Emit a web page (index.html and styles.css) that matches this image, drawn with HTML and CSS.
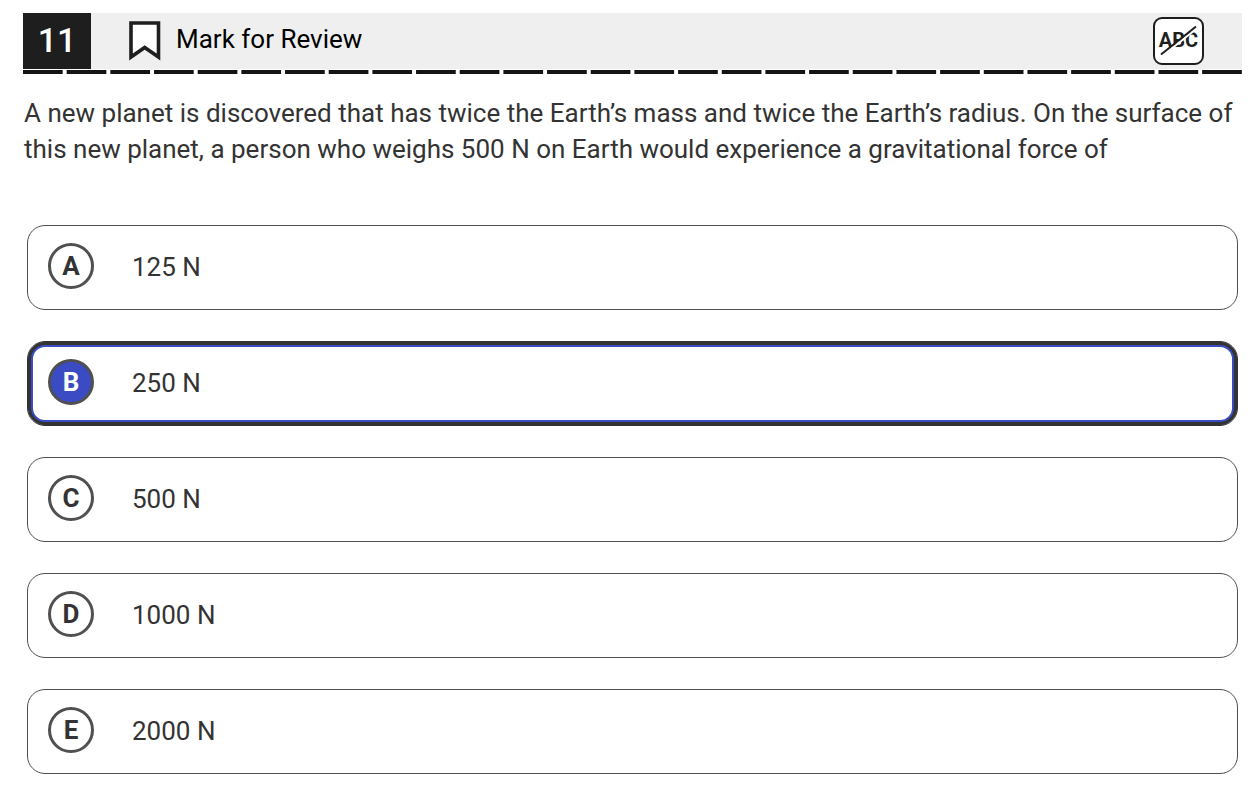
FILE: index.html
```html
<!DOCTYPE html>
<html lang="en">
<head>
    <meta charset="UTF-8">
    <meta name="viewport" content="width=device-width, initial-scale=1.0">
    <title>Question 11</title>
    <link rel="stylesheet" href="styles.css">
</head>
<body>

    <header class="question-bar">
        <h1 class="question-number">11</h1>
        <button class="mark-button" type="button">
            <svg class="bookmark" viewBox="0 0 32 40" aria-hidden="true">
                <path d="M2 2H29.500V36L15.700 26.500L2 36Z" fill="#fff" stroke="#1e1e1e" stroke-width="3.600"/>
            </svg>
            <span class="mark-text">Mark for Review</span>
        </button>
        <button class="strike-button" type="button" aria-label="Cross out answers">
            <svg class="strike-icon" viewBox="0 0 47 44" aria-hidden="true">
                <text x="23.500" y="28" text-anchor="middle">ABC</text>
                <path d="M8 36.500L43 8.500" stroke="#fff" stroke-width="2"/>
                <path d="M6 35.500L41 7.500" stroke="#1e1e1e" stroke-width="2"/>
            </svg>
        </button>
    </header>
    <div class="dashes"></div>

    <main>
        <p class="question" id="question">A new planet is discovered that has twice the Earth’s mass and twice the Earth’s radius. On the surface of this new planet, a person who weighs 500 N on Earth would experience a gravitational force of</p>

        <form class="choices" role="radiogroup" aria-labelledby="question">
            <label class="choice">
                <input type="radio" name="answer" value="A">
                <span class="letter">A</span>
                <span class="answer">125 N</span>
            </label>
            <label class="choice">
                <input type="radio" name="answer" value="B" checked>
                <span class="letter">B</span>
                <span class="answer">250 N</span>
            </label>
            <label class="choice">
                <input type="radio" name="answer" value="C">
                <span class="letter">C</span>
                <span class="answer">500 N</span>
            </label>
            <label class="choice">
                <input type="radio" name="answer" value="D">
                <span class="letter">D</span>
                <span class="answer">1000 N</span>
            </label>
            <label class="choice">
                <input type="radio" name="answer" value="E">
                <span class="letter">E</span>
                <span class="answer">2000 N</span>
            </label>
        </form>
    </main>

</body>
</html>
```
FILE: styles.css
```css
* {
    box-sizing: border-box;
}
body {
    margin: 0;
    padding: 13px 6px 13px 23px;
    background-color: white;
    color: #333;
    font-family: Roboto, Arial, sans-serif;
    font-size: 26px;
}
button {
    font: inherit;
    border: none;
    cursor: pointer;
}
.question-bar {
    display: flex;
    align-items: center;
    height: 56px;
    padding-right: 38px;
    background-color: #efefef;
}
.question-number {
    align-self: stretch;
    width: 68px;
    margin: 0;
    background-color: #1e1e1e;
    color: white;
    font-size: 34px;
    font-weight: 500;
    line-height: 54px;
    text-align: center;
}
.mark-button {
    display: flex;
    align-items: center;
    gap: 15px;
    margin-left: 38px;
    padding: 0;
    background: none;
    color: black;
}
.mark-text {
    padding-bottom: 4px;
}
.bookmark {
    width: 32px;
    height: 40px;
}
.strike-button {
    width: 51px;
    height: 48px;
    margin-left: auto;
    padding: 0;
    border: 2px solid #1e1e1e;
    border-radius: 9px;
    background-color: white;
}
.strike-icon {
    display: block;
    width: 100%;
    height: 100%;
}
.strike-icon text {
    font-size: 20px;
    font-weight: 700;
    fill: #1e1e1e;
}
/* 28 dashes across the full width, 4px apart */
.dashes {
    height: 4px;
    margin-top: 1px;
    background-image: linear-gradient(to left, transparent 4px, #141414 4px);
    background-size: calc((100% + 4px) / 28) 100%;
}
.question {
    margin: 0;
    padding: 21px 0 0 1px;
    line-height: 36px;
}
.choices {
    display: grid;
    gap: 31px;
    margin: 58px 4px 0;
}
.choice {
    display: grid;
    grid-template-columns: 46px 1fr;
    column-gap: 38px;
    align-items: center;
    height: 85px;
    padding: 0 20px 4px;
    border: 1px solid #505050;
    border-radius: 18px;
    cursor: pointer;
}
.choice:has(:checked) {
    border-color: #333;
    box-shadow: inset 0 0 0 3px #333, inset 0 0 0 5px #3a4bc4;
}
.choice input {
    grid-area: 1 / 1;
    appearance: none;
    width: 46px;
    height: 46px;
    margin: 0;
    border: 3px solid #505050;
    border-radius: 50%;
    cursor: pointer;
}
.choice input:checked {
    background-color: #3a4bc4;
}
.letter {
    grid-area: 1 / 1;
    z-index: 1;
    font-weight: 700;
    text-align: center;
}
.choice input:checked + .letter {
    color: white;
}
.answer {
    grid-area: 1 / 2;
    padding-top: 2px;
}
```
